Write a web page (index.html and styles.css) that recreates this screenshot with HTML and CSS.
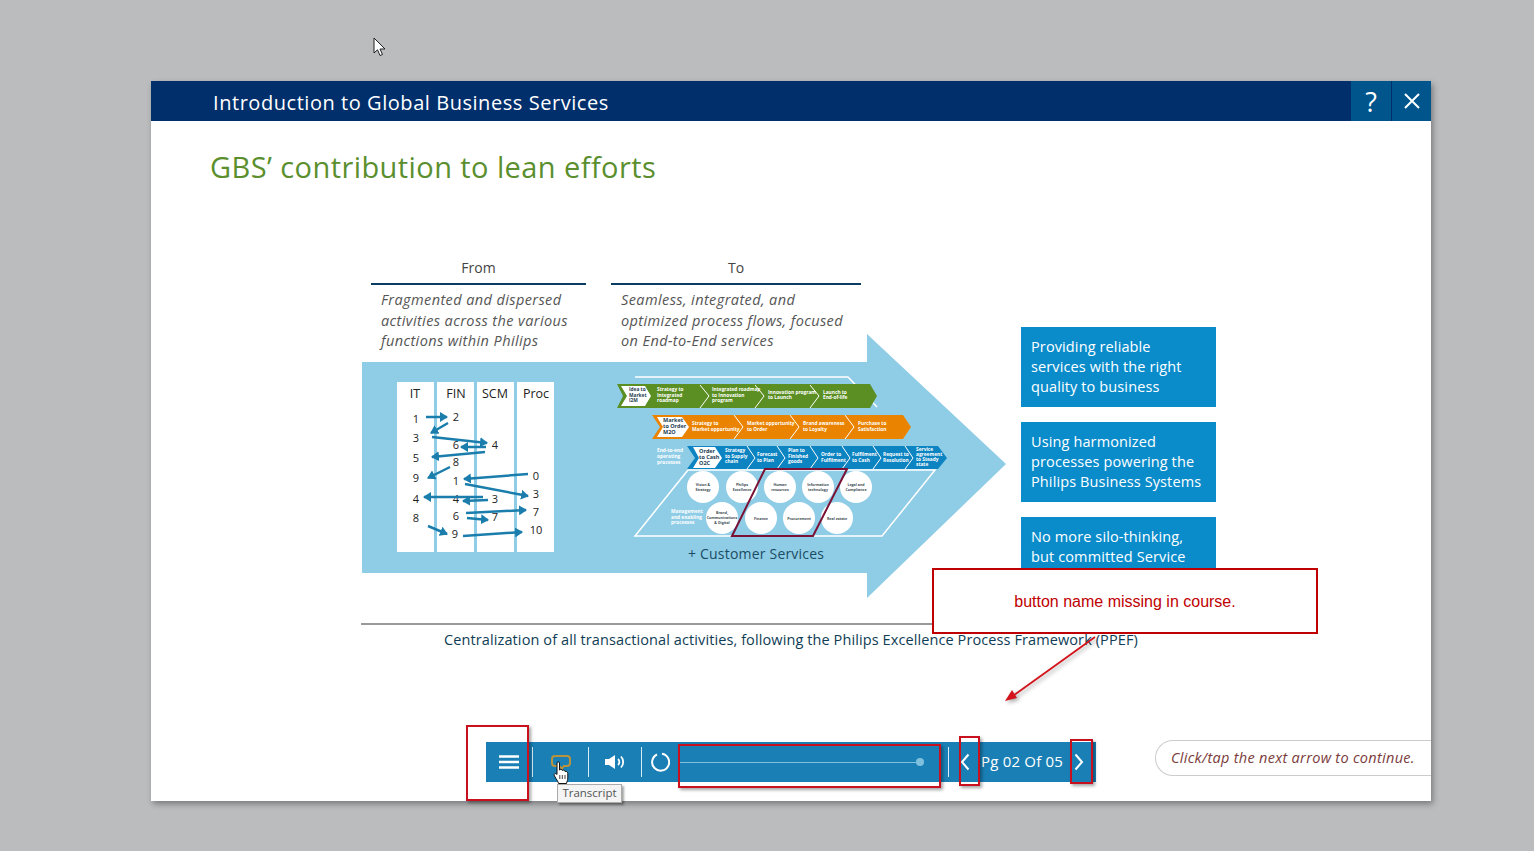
FILE: index.html
```html
<!DOCTYPE html>
<html lang="en">
<head>
    <meta charset="UTF-8">
    <title>Introduction to Global Business Services</title>
    <link rel="stylesheet" href="styles.css">
</head>
<body>
<svg class="mouse" width="14" height="20" viewBox="0 0 14 20">
    <path d="M1 1V16L4.500 12.800L7 18.500L9.500 17.500L7 12H12Z" fill="#fff" stroke="#222" stroke-width="1"/>
</svg>
<div class="window">
    <div class="head">
        <div class="head-title">Introduction to Global Business Services</div>
        <div class="head-btn head-help">?</div>
        <div class="head-btn head-close">
            <svg width="18" height="18" viewBox="0 0 18 18"><path d="M2 2L16 16M16 2L2 16" stroke="#fff" stroke-width="2"/></svg>
        </div>
    </div>
    <div class="slide">
        <h1 class="slide-title">GBS’ contribution to lean efforts</h1>
        <div class="lean">
            <div class="lean-top">
                <div class="lean-left">
                    <div class="cols">
                        <div class="col col-from">
                            <div class="col-head">From</div>
                            <p class="col-text">Fragmented and dispersed activities across the various functions within Philips</p>
                        </div>
                        <div class="col col-to">
                            <div class="col-head">To</div>
                            <p class="col-text">Seamless, integrated, and optimized process flows, focused on End-to-End services</p>
                        </div>
                    </div>
                    <svg class="arrow" width="646" height="265" viewBox="362 334 646 265">
                        <defs>
                            <marker id="tip" markerWidth="4" markerHeight="4" refX="2.800" refY="2" orient="auto">
                                <path d="M0 0L3.200 2L0 4Z" fill="#1a7dab"/>
                            </marker>
                        </defs>
                        <polygon class="big" points="362,362 867,362 867,334 1006,464 867,598 867,573 362,573"/>

                        <!-- table -->
                        <rect class="w" x="397" y="382" width="37" height="170"/>
                        <rect class="w" x="437" y="382" width="37" height="170"/>
                        <rect class="w" x="477" y="382" width="37" height="170"/>
                        <rect class="w" x="517" y="382" width="37" height="170"/>
                        <g class="th">
                            <text x="415" y="398">IT</text>
                            <text x="456" y="398">FIN</text>
                            <text x="495" y="398">SCM</text>
                            <text x="536" y="398">Proc</text>
                        </g>
                        <g class="td">
                            <text x="416" y="423">1</text>
                            <text x="416" y="442">3</text>
                            <text x="416" y="462">5</text>
                            <text x="416" y="482">9</text>
                            <text x="416" y="503">4</text>
                            <text x="416" y="522">8</text>
                            <text x="456" y="421">2</text>
                            <text x="456" y="449">6</text>
                            <text x="456" y="466">8</text>
                            <text x="456" y="485">1</text>
                            <text x="456" y="503">4</text>
                            <text x="456" y="520">6</text>
                            <text x="455" y="538">9</text>
                            <text x="495" y="449">4</text>
                            <text x="495" y="503">3</text>
                            <text x="495" y="521">7</text>
                            <text x="536" y="480">0</text>
                            <text x="536" y="498">3</text>
                            <text x="536" y="516">7</text>
                            <text x="536" y="534">10</text>
                        </g>
                        <g class="flow">
                            <line x1="426" y1="417" x2="447" y2="417" marker-end="url(#tip)"/>
                            <line x1="448" y1="423" x2="431" y2="433" marker-end="url(#tip)"/>
                            <line x1="432" y1="437" x2="487" y2="443" marker-end="url(#tip)"/>
                            <line x1="486" y1="447" x2="461" y2="447" marker-end="url(#tip)"/>
                            <line x1="485" y1="452" x2="432" y2="457" marker-end="url(#tip)"/>
                            <line x1="450" y1="467" x2="428" y2="478" marker-end="url(#tip)"/>
                            <line x1="528" y1="474" x2="464" y2="479" marker-end="url(#tip)"/>
                            <line x1="465" y1="484" x2="528" y2="496" marker-end="url(#tip)"/>
                            <line x1="483" y1="497" x2="424" y2="497" marker-end="url(#tip)"/>
                            <line x1="488" y1="500" x2="463" y2="501" marker-end="url(#tip)"/>
                            <line x1="466" y1="513" x2="526" y2="510" marker-end="url(#tip)"/>
                            <line x1="467" y1="518" x2="488" y2="520" marker-end="url(#tip)"/>
                            <line x1="428" y1="526" x2="447" y2="534" marker-end="url(#tip)"/>
                            <line x1="463" y1="536" x2="522" y2="532" marker-end="url(#tip)"/>
                        </g>

                        <!-- house outline -->
                        <polyline class="frame" points="635,377 848,377 877,407"/>
                        <polygon class="frame" points="688,470 635,536 882,536 935,470"/>

                        <!-- green row -->
                        <polygon class="green" points="617,384 870,384 877,396 870,408 617,408 623,396"/>
                        <polygon class="w" points="621,386 645,386 651,396 645,406 621,406 627,396"/>
                        <polyline class="cut" points="700,385 709,396 700,408"/>
                        <polyline class="cut" points="755,385 764,396 755,408"/>
                        <polyline class="cut" points="810,385 819,396 810,408"/>
                        <text class="lbl dark" x="629" y="391">Idea to<tspan x="629" dy="5.500">Market</tspan><tspan x="629" dy="5.500">I2M</tspan></text>
                        <text class="lbl" x="657" y="391">Strategy to<tspan x="657" dy="5.500">Integrated</tspan><tspan x="657" dy="5.500">roadmap</tspan></text>
                        <text class="lbl" x="712" y="391">Integrated roadmap<tspan x="712" dy="5.500">to Innovation</tspan><tspan x="712" dy="5.500">program</tspan></text>
                        <text class="lbl" x="768" y="393.500">Innovation program<tspan x="768" dy="5.500">to Launch</tspan></text>
                        <text class="lbl" x="823" y="393.500">Launch to<tspan x="823" dy="5.500">End-of-life</tspan></text>

                        <!-- orange row -->
                        <polygon class="orange" points="652,415 903,415 911,427 903,439 652,439 660,427"/>
                        <polygon class="w" points="657,417 682,417 689,427 682,437 657,437 663,427"/>
                        <polyline class="cut" points="734,415 743,427 734,439"/>
                        <polyline class="cut" points="790,415 799,427 790,439"/>
                        <polyline class="cut" points="845,415 854,427 845,439"/>
                        <text class="lbl dark big-lbl" x="663" y="422">Market<tspan x="663" dy="6">to Order</tspan><tspan x="663" dy="6">M2O</tspan></text>
                        <text class="lbl" x="692" y="425">Strategy to<tspan x="692" dy="5.500">Market opportunity</tspan></text>
                        <text class="lbl" x="747" y="425">Market opportunity<tspan x="747" dy="5.500">to Order</tspan></text>
                        <text class="lbl" x="803" y="425">Brand awareness<tspan x="803" dy="5.500">to Loyalty</tspan></text>
                        <text class="lbl" x="858" y="425">Purchase to<tspan x="858" dy="5.500">Satisfaction</tspan></text>

                        <!-- blue row -->
                        <text class="lbl" x="657" y="452">End-to-end<tspan x="657" dy="6">operating</tspan><tspan x="657" dy="6">processes</tspan></text>
                        <polygon class="blue" points="687,446 938,446 947,458 938,469 687,469 695,458"/>
                        <polygon class="w" points="693,447 715,447 722,458 715,468 693,468 699,458"/>
                        <polyline class="cut" points="747,446 755,458 747,469"/>
                        <polyline class="cut" points="777,446 785,458 777,469"/>
                        <polyline class="cut" points="810,446 818,458 810,469"/>
                        <polyline class="cut" points="842,446 850,458 842,469"/>
                        <polyline class="cut" points="873,446 881,458 873,469"/>
                        <polyline class="cut" points="905,446 913,458 905,469"/>
                        <text class="lbl dark big-lbl" x="699" y="453">Order<tspan x="699" dy="6">to Cash</tspan><tspan x="699" dy="6">O2C</tspan></text>
                        <text class="lbl" x="725" y="452">Strategy<tspan x="725" dy="5.500">to Supply</tspan><tspan x="725" dy="5.500">chain</tspan></text>
                        <text class="lbl" x="757" y="456">Forecast<tspan x="757" dy="5.500">to Plan</tspan></text>
                        <text class="lbl" x="788" y="452">Plan to<tspan x="788" dy="5.500">Finished</tspan><tspan x="788" dy="5.500">goods</tspan></text>
                        <text class="lbl" x="821" y="456">Order to<tspan x="821" dy="5.500">Fulfilment</tspan></text>
                        <text class="lbl" x="852" y="456">Fulfilment<tspan x="852" dy="5.500">to Cash</tspan></text>
                        <text class="lbl" x="883" y="456">Request to<tspan x="883" dy="5.500">Resolution</tspan></text>
                        <text class="lbl" x="916" y="451">Service<tspan x="916" dy="5">agreement</tspan><tspan x="916" dy="5">to Steady</tspan><tspan x="916" dy="5">state</tspan></text>

                        <!-- circles -->
                        <circle class="w" cx="703" cy="487" r="16"/>
                        <circle class="w" cx="742" cy="487" r="16"/>
                        <circle class="w" cx="780" cy="487" r="16"/>
                        <circle class="w" cx="818" cy="487" r="16"/>
                        <circle class="w" cx="856" cy="487" r="16"/>
                        <circle class="w" cx="722" cy="518" r="16"/>
                        <circle class="w" cx="761" cy="518" r="16"/>
                        <circle class="w" cx="799" cy="518" r="16"/>
                        <circle class="w" cx="837" cy="518" r="16"/>
                        <g class="circ">
                            <text x="703" y="486">Vision &amp;<tspan x="703" dy="5">Strategy</tspan></text>
                            <text x="742" y="486">Philips<tspan x="742" dy="5">Excellence</tspan></text>
                            <text x="780" y="486">Human<tspan x="780" dy="5">resources</tspan></text>
                            <text x="818" y="486">Information<tspan x="818" dy="5">technology</tspan></text>
                            <text x="856" y="486">Legal and<tspan x="856" dy="5">Compliance</tspan></text>
                            <text x="722" y="514">Brand,<tspan x="722" dy="5">Communications</tspan><tspan x="722" dy="5">&amp; Digital</tspan></text>
                            <text x="761" y="519.500">Finance</text>
                            <text x="799" y="519.500">Procurement</text>
                            <text x="837" y="519.500">Real estate</text>
                        </g>
                        <text class="lbl" x="671" y="513">Management<tspan x="671" dy="5.500">and enabling</tspan><tspan x="671" dy="5.500">processes</tspan></text>
                        <polygon class="scope" points="765,469 847,469 813,536 732,536"/>
                        <text class="cust" x="688" y="559">+ Customer Services</text>
                    </svg>
                </div>
                <div class="boxes">
                    <div class="box">Providing reliable services with the right quality to business</div>
                    <div class="box">Using harmonized processes powering the Philips Business Systems</div>
                    <div class="box">No more silo-thinking, but committed Service</div>
                </div>
            </div>
            <div class="caption">Centralization of all transactional activities, following the Philips Excellence Process Framework (PPEF)</div>
        </div>
        <div class="foot">
            <div class="bar">
                <div class="bar-btn btn-menu">
                    <svg width="20" height="14" viewBox="0 0 20 14"><path d="M0 1.500H20M0 7H20M0 12.500H20" stroke="#fff" stroke-width="2.600"/></svg>
                </div>
                <span class="sep"></span>
                <div class="bar-btn btn-script">
                    <svg width="22" height="16" viewBox="0 0 22 16"><path d="M5 2H17A3 3 0 0 1 20 5V9A3 3 0 0 1 17 12H14L12 14.500L9 12H5A3 3 0 0 1 2 9V5A3 3 0 0 1 5 2Z" fill="none" stroke="#b8923c" stroke-width="2"/></svg>
                </div>
                <span class="sep"></span>
                <div class="bar-btn btn-sound">
                    <svg width="22" height="16" viewBox="0 0 22 16">
                        <path d="M0 5H4L10 1V15L4 11H0Z" fill="#fff"/>
                        <path d="M13 5A4 4 0 0 1 13 11M16 2.500A8 8 0 0 1 16 13.500" fill="none" stroke="#fff" stroke-width="1.800"/>
                    </svg>
                </div>
                <span class="sep"></span>
                <div class="bar-btn btn-replay">
                    <svg width="20" height="20" viewBox="0 0 20 20"><path d="M7 2.500A8.500 8.500 0 1 0 12 1.800" fill="none" stroke="#fff" stroke-width="2"/></svg>
                </div>
                <div class="track"><span class="track-line"></span><span class="track-dot"></span></div>
                <span class="sep"></span>
                <div class="bar-btn btn-prev">
                    <svg width="10" height="18" viewBox="0 0 10 18"><path d="M8.500 1.500L2 9L8.500 16.500" fill="none" stroke="#fff" stroke-width="2"/></svg>
                </div>
                <div class="pages">Pg 02 Of 05</div>
                <div class="bar-btn btn-next">
                    <svg width="10" height="18" viewBox="0 0 10 18"><path d="M1.500 1.500L8 9L1.500 16.500" fill="none" stroke="#fff" stroke-width="2"/></svg>
                </div>
            </div>
            <div class="hint">Click/tap the next arrow to continue.</div>
        </div>
    </div>

    <!-- review marks drawn over the course window -->
    <div class="mark mark-menu"></div>
    <div class="mark mark-track"></div>
    <div class="mark mark-prev"></div>
    <div class="mark mark-next"></div>
    <div class="note">button name missing in course.</div>
    <svg class="note-arrow" width="110" height="80" viewBox="0 0 110 80">
        <path d="M93 6L8 67" stroke="#d4141c" stroke-width="1.800"/>
        <path d="M3 70L15 67L10 59Z" fill="#d4141c"/>
    </svg>
    <div class="tip">Transcript</div>
    <svg class="hand" width="16" height="24" viewBox="0 0 16 24">
        <path d="M4 2C4 0.500 6.500 0.500 6.500 2V9C7 8 9 8 9.300 9.500C10 8.700 11.800 9 12 10.500C13 10 14.800 10.500 14.800 12.500V17C14.800 19 14 20 13.500 22.500H5.500C5 20 3 18 1.500 15C0.500 13 2 11.500 4 13.500Z" fill="#fff" stroke="#111" stroke-width="1"/>
        <path d="M6.800 14V18M9.300 14V18M12 14V18" stroke="#111" stroke-width="0.800"/>
    </svg>
</div>
</body>
</html>
```
FILE: styles.css
```css
* {
    padding: 0;
    margin: 0;
    box-sizing: border-box;
}

body {
    height: 851px;
    overflow: hidden;
    position: relative;
    background: #bbbcbe;
    font-family: "Open Sans", "Lato", sans-serif;
}

.mouse {
    position: absolute;
    left: 373px;
    top: 37px;
}

.window {
    width: 1280px;
    height: 720px;
    margin: 81px 0 0 151px;
    position: relative;
    display: flex;
    flex-direction: column;
    background: #fff;
    box-shadow: 2px 3px 6px rgba(0, 0, 0, 0.35);
}

/* header */
.head {
    height: 40px;
    display: flex;
    align-items: center;
    background: #002f6c;
    color: #fff;
}

.head-title {
    flex: 1;
    padding: 6px 0 2px 62px;
    font-size: 20px;
    line-height: 24px;
    letter-spacing: 0.55px;
}

.head-btn {
    width: 39px;
    height: 40px;
    display: flex;
    align-items: center;
    justify-content: center;
    background: #00558c;
}

.head-help {
    width: 40px;
    margin-right: 1px;
    font-size: 27px;
}

/* slide */
.slide {
    flex: 1;
    display: flex;
    flex-direction: column;
}

.slide-title {
    padding: 28px 0 0 59px;
    height: 139px;
    font-size: 29px;
    line-height: 36px;
    font-weight: 400;
    letter-spacing: 0.42px;
    color: #5b8f2e;
}

.lean {
    width: 860px;
    margin-left: 210px;
    color: #555;
}

.lean-top {
    display: flex;
    width: 870px;
}

.lean-left {
    width: 660px;
    height: 339px;
}

.cols {
    display: flex;
    gap: 25px;
    margin-left: 10px;
}

.col-from {
    width: 215px;
}

.col-to {
    width: 250px;
}

.col-head {
    height: 25px;
    line-height: 15px;
    text-align: center;
    font-size: 14px;
    color: #444;
    border-bottom: 2px solid #0b3d63;
}

.col-text {
    height: 61px;
    margin-top: 5px;
    padding: 0 10px;
    font-size: 14.500px;
    line-height: 20.500px;
    letter-spacing: 0.4px;
    font-style: italic;
}

.arrow {
    display: block;
    margin: -17px 0 0 1px;
}

.big { fill: #8fcde6; }
.w { fill: #fff; }
.green { fill: #5b8f24; }
.orange { fill: #ea8400; }
.blue { fill: #0c84c2; }
.cut { fill: none; stroke: #fff; stroke-width: 1; }
.frame { fill: none; stroke: #fff; stroke-width: 1.500; }
.scope { fill: none; stroke: #7a1235; stroke-width: 2; }
.flow line { stroke: #1a7dab; stroke-width: 2.500; }

.th text, .td text, .circ text {
    text-anchor: middle;
}

.th text {
    font-size: 12.500px;
    fill: #222;
}

.td text {
    font-size: 11px;
    fill: #222;
}

.lbl {
    font-size: 4.800px;
    font-weight: 700;
    fill: #fff;
}

.lbl.dark {
    fill: #1d3c50;
}

.lbl.big-lbl {
    font-size: 5.500px;
}

.circ text {
    font-size: 3.600px;
    font-weight: 700;
    fill: #3c4a52;
}

.cust {
    font-size: 14px;
    letter-spacing: 0.2px;
    fill: #1b4b63;
}

.boxes {
    display: flex;
    flex-direction: column;
    gap: 15px;
    margin-top: 67px;
}

.box {
    width: 195px;
    height: 80px;
    padding: 10px 10px 0;
    background: #0a8ccb;
    color: #fff;
    font-size: 14.500px;
    line-height: 20px;
    letter-spacing: 0.12px;
}

.caption {
    margin-top: 24px;
    padding-top: 6px;
    border-top: 2px solid #999;
    text-align: center;
    font-size: 14.500px;
    line-height: 18px;
    letter-spacing: 0.1px;
    color: #0f3d55;
}

/* bottom bar */
.foot {
    margin-top: auto;
    padding: 0 0 19px 335px;
    display: flex;
    justify-content: space-between;
    align-items: flex-start;
}

.bar {
    width: 610px;
    height: 40px;
    margin-top: 2px;
    display: flex;
    align-items: center;
    background: #1a7fb5;
    color: #fff;
}

.bar-btn {
    height: 40px;
    display: flex;
    align-items: center;
    justify-content: center;
}

.sep {
    width: 1px;
    height: 30px;
    background: #d8ecf5;
}

.btn-menu { width: 46px; }
.btn-script { width: 55px; }
.btn-sound { width: 52px; padding-left: 2px; }
.btn-replay { width: 36px; }
.btn-prev { width: 32px; }
.btn-next { width: 33px; padding-right: 2px; }

.track {
    width: 270px;
    padding: 0 24px 0 2px;
    display: flex;
    align-items: center;
}

.track-line {
    flex: 1;
    height: 1px;
    background: #7fc0de;
}

.track-dot {
    width: 8px;
    height: 8px;
    border-radius: 50%;
    background: #7fc0de;
}

.pages {
    width: 82px;
    margin-bottom: 2px;
    white-space: nowrap;
    font-size: 15px;
    letter-spacing: 0.2px;
}

.hint {
    width: 276px;
    height: 36px;
    padding-left: 15px;
    border: 1px solid #ccc;
    border-right: 0;
    border-radius: 18px 0 0 18px;
    font-size: 14.500px;
    line-height: 33px;
    letter-spacing: 0.3px;
    font-style: italic;
    white-space: nowrap;
    color: #7a3b3b;
}

/* annotations */
.mark {
    position: absolute;
    border: 2px solid #c8101e;
    box-shadow: 2px 2px 3px rgba(0, 0, 0, 0.35);
}

.mark-menu { left: 315px; top: 644px; width: 63px; height: 76px; }
.mark-track { left: 527px; top: 663px; width: 263px; height: 44px; }
.mark-prev { left: 808px; top: 655px; width: 21px; height: 50px; }
.mark-next { left: 919px; top: 658px; width: 23px; height: 45px; }

.note {
    position: absolute;
    left: 781px;
    top: 487px;
    width: 386px;
    height: 66px;
    border: 2px solid #c00000;
    background: #fff;
    color: #c00000;
    text-align: center;
    font-family: "Liberation Sans", sans-serif;
    font-size: 16px;
    line-height: 64px;
}

.note-arrow {
    position: absolute;
    left: 851px;
    top: 550px;
    filter: drop-shadow(2px 2px 2px rgba(0, 0, 0, 0.35));
}

.tip {
    position: absolute;
    left: 406px;
    top: 703px;
    width: 65px;
    height: 19px;
    border: 1px solid #aaa;
    background: #f4f4f4;
    box-shadow: 2px 2px 2px rgba(0, 0, 0, 0.35);
    text-align: center;
    font-size: 11.500px;
    line-height: 16px;
    color: #555;
}

.hand {
    position: absolute;
    left: 402px;
    top: 680px;
}
```
